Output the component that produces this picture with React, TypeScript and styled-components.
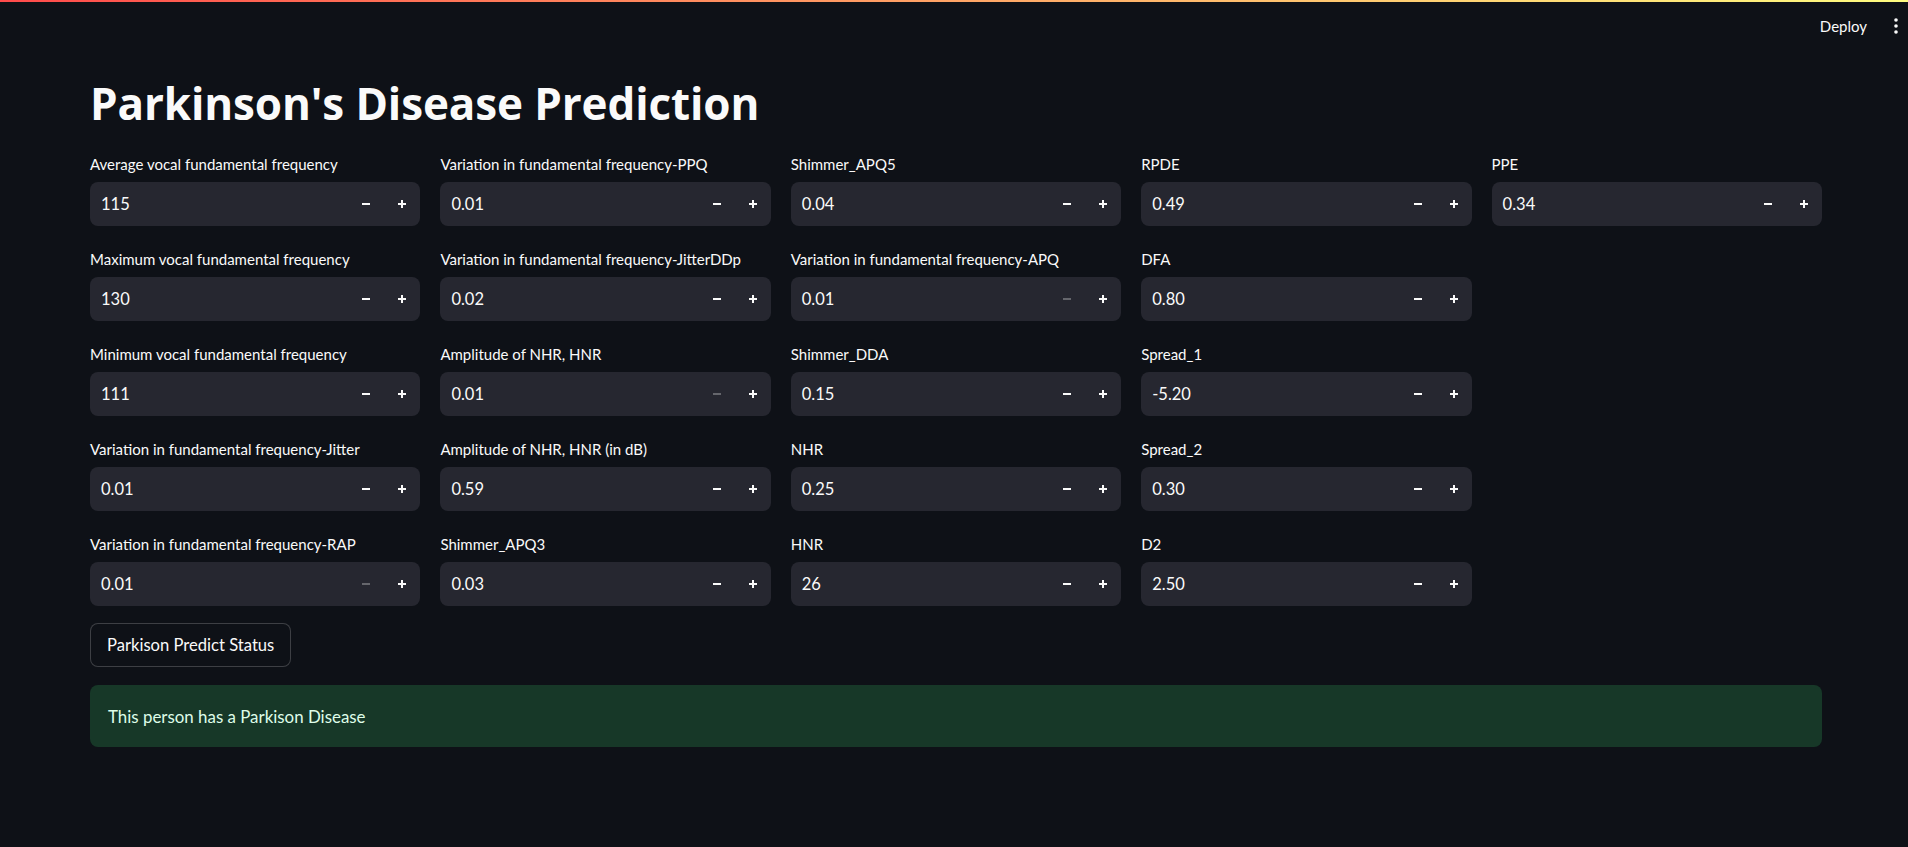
import React from "react";
import styled, { createGlobalStyle } from "styled-components";

const GlobalStyle = createGlobalStyle`
  html, body {
    margin: 0;
    padding: 0;
    background: #0e1117;
    color: #fafafa;
    font-family: Lato, "Noto Sans", sans-serif;
  }
  * { box-sizing: border-box; }
`;

const Page = styled.div`
  min-height: 847px;
  background: #0e1117;
`;

const Decoration = styled.div`
  height: 2px;
  background: linear-gradient(90deg, #ff4b4b, #fffd80);
`;

const Header = styled.header`
  height: 48px;
  display: flex;
  align-items: center;
  justify-content: flex-end;
  padding-right: 2px;
  gap: 19px;
`;

const DeployButton = styled.button`
  background: transparent;
  border: none;
  color: #fafafa;
  font-family: Lato, sans-serif;
  font-size: 15px;
  padding: 0;
  cursor: pointer;
`;

const MenuButton = styled.button`
  background: transparent;
  border: none;
  padding: 0 8px;
  display: flex;
  align-items: center;
  color: #fafafa;
`;

const Main = styled.main`
  padding: 0 86px 40px 90px;
  display: flex;
  flex-direction: column;
`;

const Title = styled.h1`
  margin: 0;
  padding-top: 25.5px;
  font-family: "Open Sans", Lato, sans-serif;
  font-size: 44px;
  font-weight: 700;
  line-height: 1.24;
  color: #fafafa;
  letter-spacing: -0.12px;
`;

const Columns = styled.div`
  display: grid;
  grid-template-columns: repeat(5, 1fr);
  column-gap: 20px;
  margin-top: 19px;
`;

const Column = styled.div`
  display: flex;
  flex-direction: column;
  gap: 18px;
`;

const Field = styled.div`
  display: flex;
  flex-direction: column;
`;

const Label = styled.label`
  height: 29px;
  margin-bottom: 4px;
  display: flex;
  align-items: center;
  font-size: 15px;
  line-height: 1.2;
  color: #fafafa;
  white-space: nowrap;
`;

const InputBox = styled.div`
  height: 44px;
  border-radius: 8px;
  background: #262730;
  display: flex;
  align-items: center;
`;

const Value = styled.span`
  flex: 1;
  padding-left: 11px;
  font-size: 16.5px;
  color: #fafafa;
`;

const Step = styled.button<{ $disabled?: boolean }>`
  width: 36px;
  height: 44px;
  border: none;
  background: transparent;
  padding: 0;
  display: flex;
  align-items: center;
  justify-content: center;
  color: ${(p) => (p.$disabled ? "rgba(250,250,250,0.3)" : "#fafafa")};
`;

const PredictButton = styled.button`
  margin-top: 17px;
  align-self: flex-start;
  height: 44px;
  padding: 0 16px;
  border: 1px solid rgba(250, 250, 250, 0.2);
  border-radius: 8px;
  background: #0e1117;
  color: #fafafa;
  font-family: Lato, sans-serif;
  font-size: 16.6px;
`;

const Alert = styled.div`
  margin-top: 18px;
  height: 62px;
  border-radius: 8px;
  background: #173828;
  color: #dffde9;
  display: flex;
  align-items: center;
  padding: 0 18px;
  font-size: 16.9px;
`;

const Minus = () => (
  <svg width="10" height="10" viewBox="0 0 10 10">
    <rect x="1" y="4" width="8" height="2" fill="currentColor" />
  </svg>
);

const Plus = () => (
  <svg width="10" height="10" viewBox="0 0 10 10">
    <rect x="1" y="4" width="8" height="2" fill="currentColor" />
    <rect x="4" y="1" width="2" height="8" fill="currentColor" />
  </svg>
);

type FieldDef = { label: string; value: string; minDisabled?: boolean };

const columns: FieldDef[][] = [
  [
    { label: "Average vocal fundamental frequency", value: "115" },
    { label: "Maximum vocal fundamental frequency", value: "130" },
    { label: "Minimum vocal fundamental frequency", value: "111" },
    { label: "Variation in fundamental frequency-Jitter", value: "0.01" },
    { label: "Variation in fundamental frequency-RAP", value: "0.01", minDisabled: true },
  ],
  [
    { label: "Variation in fundamental frequency-PPQ", value: "0.01" },
    { label: "Variation in fundamental frequency-JitterDDp", value: "0.02" },
    { label: "Amplitude of NHR, HNR", value: "0.01", minDisabled: true },
    { label: "Amplitude of NHR, HNR (in dB)", value: "0.59" },
    { label: "Shimmer_APQ3", value: "0.03" },
  ],
  [
    { label: "Shimmer_APQ5", value: "0.04" },
    { label: "Variation in fundamental frequency-APQ", value: "0.01", minDisabled: true },
    { label: "Shimmer_DDA", value: "0.15" },
    { label: "NHR", value: "0.25" },
    { label: "HNR", value: "26" },
  ],
  [
    { label: "RPDE", value: "0.49" },
    { label: "DFA", value: "0.80" },
    { label: "Spread_1", value: "-5.20" },
    { label: "Spread_2", value: "0.30" },
    { label: "D2", value: "2.50" },
  ],
  [{ label: "PPE", value: "0.34" }],
];

const NumberField = ({ label, value, minDisabled }: FieldDef) => (
  <Field>
    <Label>{label}</Label>
    <InputBox>
      <Value>{value}</Value>
      <Step $disabled={minDisabled} aria-label="decrement">
        <Minus />
      </Step>
      <Step aria-label="increment">
        <Plus />
      </Step>
    </InputBox>
  </Field>
);

export default function App() {
  return (
    <Page>
      <GlobalStyle />
      <Decoration />
      <Header>
        <DeployButton>Deploy</DeployButton>
        <MenuButton aria-label="menu">
          <svg width="4" height="16" viewBox="0 0 4 16">
            <circle cx="2" cy="2" r="1.8" fill="currentColor" />
            <circle cx="2" cy="8" r="1.8" fill="currentColor" />
            <circle cx="2" cy="14" r="1.8" fill="currentColor" />
          </svg>
        </MenuButton>
      </Header>
      <Main>
        <Title>Parkinson's Disease Prediction</Title>
        <Columns>
          {columns.map((col, i) => (
            <Column key={i}>
              {col.map((f) => (
                <NumberField key={f.label} {...f} />
              ))}
            </Column>
          ))}
        </Columns>
        <PredictButton>Parkison Predict Status</PredictButton>
        <Alert>This person has a Parkison Disease</Alert>
      </Main>
    </Page>
  );
}
